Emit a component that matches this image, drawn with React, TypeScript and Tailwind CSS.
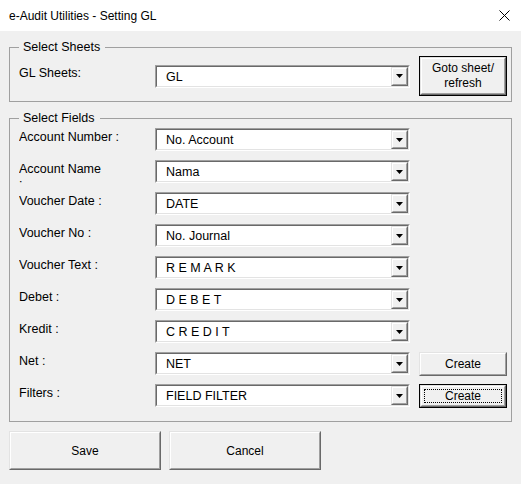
import React from "react";

const raisedOuter =
  "border border-t-[#e3e3e3] border-l-[#e3e3e3] border-b-[#696969] border-r-[#696969]";
const raisedInner =
  "border border-t-white border-l-white border-b-[#a0a0a0] border-r-[#a0a0a0] bg-[#f0f0f0]";

function Arrow() {
  return (
    <div className={`w-[17px] h-full flex ${raisedOuter}`}>
      <div className={`flex-1 flex items-center justify-center ${raisedInner}`}>
        <svg width="7" height="4" viewBox="0 0 7 4">
          <polygon points="0,0 7,0 3.5,4" fill="#000" />
        </svg>
      </div>
    </div>
  );
}

function Combo({ value }: { value: string }) {
  return (
    <div className="w-[255px] h-[23px] flex border border-t-[#a0a0a0] border-l-[#a0a0a0] border-b-white border-r-white">
      <div className="flex-1 flex bg-white border border-t-[#696969] border-l-[#696969] border-b-[#e3e3e3] border-r-[#e3e3e3]">
        <div className="flex-1 flex items-center pl-[9px] pt-[1px] whitespace-pre text-black text-[12.5px]">{value}</div>
        <Arrow />
      </div>
    </div>
  );
}

function Btn({
  children,
  def,
  focus,
  className,
}: {
  children: React.ReactNode;
  def?: boolean;
  focus?: boolean;
  className: string;
}) {
  const body = (
    <div className={`flex-1 flex ${raisedOuter}`}>
      <div className={`flex-1 flex items-center justify-center text-center ${raisedInner} ${focus ? "p-[2px]" : ""}`}>
        {focus ? (
          <div className="w-full h-full flex items-center justify-center border border-dotted border-black">{children}</div>
        ) : (
          children
        )}
      </div>
    </div>
  );
  return (
    <div className={`flex ${def ? "border border-black" : ""} ${className}`}>{body}</div>
  );
}

const rows: { label: React.ReactNode; value: string; btn?: "net" | "filter" }[] = [
  { label: "Account Number :", value: "No. Account" },
  {
    label: (
      <>
        <div>Account Name</div>
        <div className="leading-[16px]">:</div>
      </>
    ),
    value: "Nama",
  },
  { label: "Voucher Date :", value: "DATE" },
  { label: "Voucher No :", value: "No. Journal" },
  { label: "Voucher Text :", value: "R E M A R K" },
  { label: "Debet :", value: "D E B E T" },
  { label: "Kredit :", value: "C R E D I T" },
  { label: "Net :", value: "NET", btn: "net" },
  { label: "Filters :", value: "FIELD FILTER", btn: "filter" },
];

export default function App() {
  return (
    <div className="w-[521px] h-[484px] flex flex-col bg-[#f0f0f0] font-['Liberation_Sans',Arial,sans-serif] text-[12px] leading-[14px] text-black overflow-hidden">
      <div className="h-[31px] bg-white flex items-center justify-between pl-[9px] pr-[11px]">
        <span>e-Audit Utilities - Setting GL</span>
        <svg width="11" height="11" viewBox="0 0 11 11">
          <path d="M0.5 0.5 L10.5 10.5 M10.5 0.5 L0.5 10.5" stroke="#000" strokeWidth="1" />
        </svg>
      </div>
      <div className="flex flex-col pt-[9px] pl-[9px]">
        <fieldset className="w-[503px] border border-[#a0a0a0] pl-[9px] pr-[4px] pt-[2px] pb-[5px]">
          <legend className="pl-[4px] pr-[5px] leading-[14px] text-[12.5px]">Select Sheets</legend>
          <div className="flex items-center h-[40px]">
            <div className="flex items-start">
              <div className="w-[136px] pt-[1px] text-[12.5px]">GL Sheets:</div>
              <Combo value="GL" />
            </div>
            <Btn def className="ml-[9px] w-[88px] h-[40px]">
              <div className="leading-[15px]">
                Goto sheet/
                <br />
                refresh
              </div>
            </Btn>
          </div>
        </fieldset>
        <fieldset className="mt-[9px] w-[503px] border border-[#a0a0a0] pl-[9px] pr-[4px] pt-[3px] pb-[14px]">
          <legend className="pl-[4px] pr-[5px] leading-[14px] text-[12.5px]">Select Fields</legend>
          <div className="flex flex-col gap-[9px]">
            {rows.map((r, i) => (
              <div key={i} className="flex items-start h-[23px]">
                <div className="w-[136px] h-[23px] pt-[2px] overflow-hidden text-[12.5px]">{r.label}</div>
                <Combo value={r.value} />
                {r.btn === "net" && (
                  <Btn className="ml-[9px] w-[88px] h-[24px]">Create</Btn>
                )}
                {r.btn === "filter" && (
                  <Btn def focus className="ml-[9px] w-[88px] h-[24px]">
                    Create
                  </Btn>
                )}
              </div>
            ))}
          </div>
        </fieldset>
        <div className="mt-[9px] flex gap-[8px]">
          <Btn className="w-[152px] h-[39px]">Save</Btn>
          <Btn className="w-[152px] h-[39px]">Cancel</Btn>
        </div>
      </div>
    </div>
  );
}
